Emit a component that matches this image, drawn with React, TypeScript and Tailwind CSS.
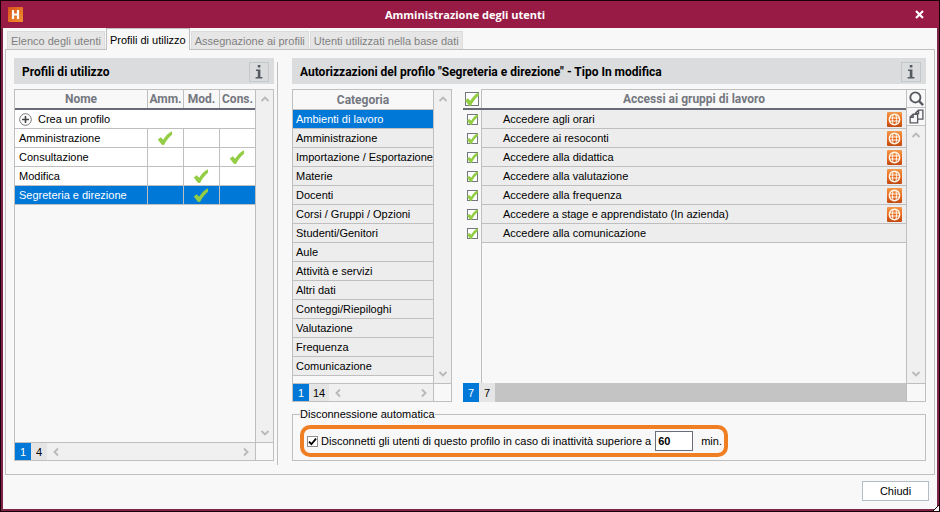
import { useState } from 'react';
import clsx from 'clsx';

const tabs = ['Elenco degli utenti', 'Profili di utilizzo', 'Assegnazione ai profili', 'Utenti utilizzati nella base dati'];

const profiles = [
  { name: 'Amministrazione', level: 'Amm.' },
  { name: 'Consultazione', level: 'Cons.' },
  { name: 'Modifica', level: 'Mod.' },
  { name: 'Segreteria e direzione', level: 'Mod.' },
];

const levels = ['Amm.', 'Mod.', 'Cons.'];

const categories = [
  'Ambienti di lavoro',
  'Amministrazione',
  'Importazione / Esportazione',
  'Materie',
  'Docenti',
  'Corsi / Gruppi / Opzioni',
  'Studenti/Genitori',
  'Aule',
  'Attività e servizi',
  'Altri dati',
  'Conteggi/Riepiloghi',
  'Valutazione',
  'Frequenza',
  'Comunicazione',
];

const accesses = [
  { name: 'Accedere agli orari', web: true },
  { name: 'Accedere ai resoconti', web: true },
  { name: 'Accedere alla didattica', web: true },
  { name: 'Accedere alla valutazione', web: true },
  { name: 'Accedere alla frequenza', web: true },
  { name: 'Accedere a stage e apprendistato (In azienda)', web: true },
  { name: 'Accedere alla comunicazione', web: false },
];

function GreenCheck({ className }: { className?: string }) {
  return (
    <svg viewBox="0 0 16 16" className={className} aria-hidden="true">
      <path d="M.8 9.4 3.8 7.2 6.2 9.8C8 6.6 11 3 14.8 1.2L15.2 4.4C12 7 9 10.8 7 15L4.8 14.8Z" fill="#92cd44" />
    </svg>
  );
}

function Globe() {
  return (
    <svg viewBox="0 0 15 15" className="h-[15px] w-[15px]" aria-hidden="true">
      <defs>
        <linearGradient id="globe" x1="0" y1="0" x2="0" y2="1">
          <stop offset="0" stopColor="#f39a4e" />
          <stop offset="0.5" stopColor="#ea6a1c" />
          <stop offset="1" stopColor="#c04a12" />
        </linearGradient>
      </defs>
      <rect width="15" height="15" rx="1" fill="url(#globe)" />
      <g fill="none" stroke="#fff6ea">
        <circle cx="7.5" cy="7.5" r="5.2" strokeWidth="1.4" />
        <path d="M6 2.6Q4.8 7.5 6 12.4M9 2.6Q10.2 7.5 9 12.4M2.5 6h10M2.5 9h10" strokeWidth="1" />
      </g>
    </svg>
  );
}

function Chevron({ dir }: { dir: 'up' | 'down' | 'left' | 'right' }) {
  const d = {
    up: 'M1.5 7 5 3.5 8.5 7',
    down: 'M1.5 3 5 6.5 8.5 3',
    left: 'M7 1.5 3.5 5 7 8.5',
    right: 'M3 1.5 6.5 5 3 8.5',
  }[dir];
  return (
    <svg viewBox="0 0 10 10" className="h-[10px] w-[10px]" aria-hidden="true">
      <path d={d} fill="none" stroke="#b9b9b9" strokeWidth="1.9" />
    </svg>
  );
}

function VerticalBar() {
  return (
    <div className="flex flex-1 flex-col items-center justify-between bg-[#f0f0f0] py-1">
      <Chevron dir="up" />
      <Chevron dir="down" />
    </div>
  );
}

function Counter({ current, total }: { current: number; total: number }) {
  return (
    <>
      <span className="flex w-4 items-center justify-center bg-[#0078d7] text-white">{current}</span>
      <span className="flex min-w-4 items-center justify-center bg-[#e5e5e5] px-1">{total}</span>
    </>
  );
}

function PanelHeader({ title }: { title: string }) {
  return (
    <div className="flex h-[26px] items-center justify-between bg-[#dadcde] pt-px pr-[5px] pl-2">
      <h2 className="font-['Roboto',Arial,sans-serif] text-[12px] font-bold">{title}</h2>
      <button aria-label="Informazioni" className="flex h-5 w-5 items-center justify-center border border-[#c3c9cb] text-[#565b62]">
        <svg viewBox="0 0 8 14" className="h-[14px] w-2" aria-hidden="true">
          <path d="M2.8 0h2.6v2.4H2.8ZM1 4.6h4.4v7.4H7.4V13.4H.6V12h2.2V6H1Z" fill="currentColor" />
        </svg>
      </button>
    </div>
  );
}

function CheckField({ label, checked, big, onChange }: { label: string; checked: boolean; big?: boolean; onChange: () => void }) {
  return (
    <label className={clsx('relative block', big ? 'h-[14px] w-[14px]' : 'h-[11px] w-[11px]')}>
      <input
        type="checkbox"
        aria-label={label}
        checked={checked}
        onChange={onChange}
        className="block h-full w-full appearance-none border border-[#737780] bg-white"
      />
      {checked && <GreenCheck className="pointer-events-none absolute inset-0 h-full w-full scale-110" />}
    </label>
  );
}

const headFont = "p-0 font-['Roboto',Arial,sans-serif] text-[12px] font-bold text-[#74777f]";
const headCell = 'h-5 border-b-2 border-[#686b75]';

function ProfilesPanel() {
  const [selected, setSelected] = useState('Segreteria e direzione');

  return (
    <section className="flex w-[260px] shrink-0 flex-col gap-[5px]">
      <PanelHeader title="Profili di utilizzo" />
      <div className="flex flex-1 flex-col border border-[#bfbfbf]">
        <div className="flex flex-1">
          <div className="flex-1 border-r border-[#bfbfbf]">
            <table className="w-full table-fixed border-separate border-spacing-0">
              <thead>
                <tr>
                  <th className={clsx(headFont, headCell)}>Nome</th>
                  {levels.map((level) => (
                    <th key={level} className={clsx(headFont, headCell, 'w-9')}>
                      <span className="flex h-[18px] items-center justify-center border-l border-[#bfbfbf]">{level}</span>
                    </th>
                  ))}
                </tr>
              </thead>
              <tbody>
                <tr className="bg-white">
                  <td colSpan={4} className="h-[19px] border-b border-[#bfbfbf] p-0 pl-1">
                    <button className="flex items-center gap-1.5">
                      <svg viewBox="0 0 13 13" className="h-[13px] w-[13px]" aria-hidden="true">
                        <circle cx="6.5" cy="6.5" r="5.8" fill="none" stroke="#777" />
                        <path d="M6.5 3v7M3 6.5h7" stroke="#444" strokeWidth="1.6" />
                      </svg>
                      Crea un profilo
                    </button>
                  </td>
                </tr>
                {profiles.map((p) => (
                  <tr
                    key={p.name}
                    onClick={() => setSelected(p.name)}
                    className={p.name === selected ? 'bg-[#0078d7] text-white' : 'bg-white'}
                  >
                    <td className="h-[19px] border-b border-[#bfbfbf] p-0 pl-1">{p.name}</td>
                    {levels.map((level) => (
                      <td key={level} className="h-[19px] border-b border-l border-[#bfbfbf] p-0 pr-0.5">
                        {p.level === level && <GreenCheck className="mx-auto h-4 w-4" />}
                      </td>
                    ))}
                  </tr>
                ))}
              </tbody>
            </table>
          </div>
          <div className="flex w-[17px] flex-col">
            <VerticalBar />
          </div>
        </div>
        <div className="flex h-[18px] border-t border-[#bfbfbf]">
          <Counter current={1} total={4} />
          <div className="flex flex-1 items-center justify-between border-r border-[#bfbfbf] bg-[#f0f0f0] px-1">
            <Chevron dir="left" />
            <Chevron dir="right" />
          </div>
          <div className="w-[17px]" />
        </div>
      </div>
    </section>
  );
}

function CategoryList() {
  const [selected, setSelected] = useState(categories[0]);

  return (
    <div className="flex w-[160px] shrink-0 flex-col border border-[#bfbfbf]">
      <div className="flex flex-1">
        <div className="flex-1 border-r border-[#bfbfbf]">
          <table className="w-full table-fixed border-separate border-spacing-0">
            <thead>
              <tr>
                <th className={clsx(headFont, 'h-5 border-b border-[#bfbfbf]')}>Categoria</th>
              </tr>
            </thead>
            <tbody>
              {categories.map((c) => (
                <tr key={c} onClick={() => setSelected(c)} className={c === selected ? 'bg-[#0078d7] text-white' : 'bg-[#ededed]'}>
                  <td className="h-[19px] border-b border-[#bfbfbf] p-0 pl-[3px] whitespace-nowrap">{c}</td>
                </tr>
              ))}
            </tbody>
          </table>
        </div>
        <div className="flex w-[17px] flex-col">
          <VerticalBar />
        </div>
      </div>
      <div className="flex h-[18px] border-t border-[#bfbfbf]">
        <Counter current={1} total={14} />
        <div className="flex flex-1 items-center justify-between border-r border-[#bfbfbf] bg-[#f0f0f0] px-1">
          <Chevron dir="left" />
          <Chevron dir="right" />
        </div>
        <div className="w-[17px]" />
      </div>
    </div>
  );
}

function AccessList() {
  const [granted, setGranted] = useState(accesses.map(() => true));
  const all = granted.every(Boolean);

  return (
    <div className="flex flex-1 flex-col">
      <div className="flex flex-1">
        <div className="flex flex-1 flex-col">
          <table className="w-full border-separate border-spacing-0">
            <thead>
              <tr>
                <th className={clsx(headFont, headCell, 'w-[18px] pl-0.5')}>
                  <CheckField big label="Tutti gli accessi" checked={all} onChange={() => setGranted(granted.map(() => !all))} />
                </th>
                <th className={clsx(headFont, headCell)}>
                  <span className="flex h-[19px] items-center justify-center border-t border-l border-[#bfbfbf]">
                    Accessi ai gruppi di lavoro
                  </span>
                </th>
              </tr>
            </thead>
            <tbody>
              {accesses.map((a, i) => (
                <tr key={a.name}>
                  <td className="h-[19px] p-0 pl-1">
                    <CheckField
                      label={a.name}
                      checked={granted[i]}
                      onChange={() => setGranted(granted.map((g, j) => (j === i ? !g : g)))}
                    />
                  </td>
                  <td className="h-[19px] border-b border-l border-[#bfbfbf] bg-[#ededed] p-0 pr-1 pl-[21px]">
                    <span className="flex items-center justify-between">
                      {a.name}
                      {a.web && <Globe />}
                    </span>
                  </td>
                </tr>
              ))}
            </tbody>
          </table>
          <div className="ml-[18px] flex-1 border-l border-[#bfbfbf]" />
        </div>
        <div className="flex w-5 flex-col border border-b-0 border-[#bfbfbf]">
          <button aria-label="Cerca" className="flex h-[18px] items-center justify-center border-b border-[#bfbfbf]">
            <svg viewBox="0 0 16 16" className="h-[15px] w-[15px]" fill="none" stroke="#565960" aria-hidden="true">
              <circle cx="6.8" cy="6.8" r="5.4" strokeWidth="2" />
              <path d="m10.4 10.4 4.6 4.6" strokeWidth="2.6" />
            </svg>
          </button>
          <button aria-label="Copia" className="flex h-[18px] items-center justify-center border-b border-[#bfbfbf]">
            <svg viewBox="0 0 16 16" className="h-[15px] w-[15px]" fill="none" stroke="#565960" strokeWidth="1.4" aria-hidden="true">
              <path d="M7 5.5V4.2L10 1.2h4.8v9.6H9.2M10.2 1.4v3.4H7" />
              <path d="M4.4 5.6h4.8v9.2H1.2V8.6ZM4.5 5.8v3H1.4" />
            </svg>
          </button>
          <VerticalBar />
        </div>
      </div>
      <div className="flex h-[19px]">
        <Counter current={7} total={7} />
        <div className="flex-1 bg-[#c4c4c4]" />
        <div className="w-5 border border-[#bfbfbf]" />
      </div>
    </div>
  );
}

function AutoDisconnect() {
  const [enabled, setEnabled] = useState(true);
  const [minutes, setMinutes] = useState('60');

  return (
    <fieldset className="border border-[#bfbfbf] pr-2 pb-[3px] pl-[7px]">
      <legend className="mb-1 h-[14px] leading-[14px]">Disconnessione automatica</legend>
      <div className="flex h-8 w-fit items-center rounded-[10px] border-4 border-[#ef7f22] pr-0.5 pl-[3px]">
        <input
          id="auto-disconnect"
          type="checkbox"
          checked={enabled}
          onChange={(e) => setEnabled(e.target.checked)}
          className="peer h-[11px] w-[11px] appearance-none border border-[#8e8f8f] bg-white"
        />
        <svg viewBox="0 0 11 11" className="pointer-events-none invisible -ml-[11px] h-[11px] w-[11px] peer-checked:visible" aria-hidden="true">
          <path d="M2 5.6 4.4 8.2 9 2.6" fill="none" stroke="#000" strokeWidth="1.8" />
        </svg>
        <label htmlFor="auto-disconnect" className="pl-[3px]">
          Disconnetti gli utenti di questo profilo in caso di inattività superiore a
        </label>
        <input
          aria-label="Minuti di inattività"
          value={minutes}
          onChange={(e) => setMinutes(e.target.value)}
          className="mr-2 ml-1 h-5 w-[38px] border border-[#6b6e78] bg-white px-0.5 font-bold"
        />
        min.
      </div>
    </fieldset>
  );
}

export default function App() {
  const [tab, setTab] = useState(1);

  return (
    <div className="flex min-h-screen border border-[#1a0008] bg-[#7d2447] font-['Liberation_Sans',Arial,sans-serif] text-[11px] leading-[14px] text-black">
      <div className="flex flex-1 flex-col">
        <header className="grid h-[27px] grid-cols-[30px_1fr_40px] items-center bg-[#981b46] text-white">
          <svg viewBox="0 0 15 15" className="ml-[7px] h-[15px] w-[15px]" aria-hidden="true">
            <defs>
              <linearGradient id="logo" x1="0" y1="0" x2="1" y2="1">
                <stop offset="0" stopColor="#d9521a" />
                <stop offset="1" stopColor="#f0922f" />
              </linearGradient>
            </defs>
            <rect width="15" height="15" rx="1" fill="url(#logo)" />
            <path d="M5 3v9M10 3v9M5 7.5h5" stroke="#fff" strokeWidth="2.2" />
          </svg>
          <h1 className="text-center font-['Open_Sans','Noto_Sans',sans-serif] text-[11px] font-bold">Amministrazione degli utenti</h1>
          <button aria-label="Chiudi finestra" className="flex justify-self-end pr-[15px]">
            <svg viewBox="0 0 9 9" className="h-[9px] w-[9px]" aria-hidden="true">
              <path d="m1 1 7 7M8 1 1 8" stroke="#fff" strokeWidth="2.2" />
            </svg>
          </button>
        </header>

        <main className="relative mx-0.5 mb-0.5 flex flex-1 flex-col bg-[#f8f8f8] px-0.5">
          <div role="tablist" className="flex h-[22px] items-end gap-px pl-0.5">
            {tabs.map((t, i) => (
              <button
                key={t}
                role="tab"
                aria-selected={tab === i}
                onClick={() => setTab(i)}
                className={clsx(
                  'border-x border-t px-[3px] whitespace-nowrap',
                  tab === i ? 'relative z-10 h-[22px] border-[#bfbfbf] bg-[#f8f8f8]' : 'h-[19px] border-[#dcdcdc] bg-[#e6e6e6] text-[#808080]'
                )}
              >
                {t}
              </button>
            ))}
          </div>

          <div className="-mt-px flex flex-1 gap-[3px] border border-[#bfbfbf] px-2 pt-2 pb-[13px]">
            <ProfilesPanel />
            <div className="mt-1 -mb-1 w-px bg-[#bfbfbf]" />
            <section className="ml-[11px] flex flex-1 flex-col gap-[5px]">
              <PanelHeader title={'Autorizzazioni del profilo "Segreteria e direzione" - Tipo In modifica'} />
              <div className="flex flex-1 gap-[11px]">
                <CategoryList />
                <AccessList />
              </div>
              <AutoDisconnect />
            </section>
          </div>

          <footer className="flex h-[34px] items-center justify-end pr-1.5 pb-[3px]">
            <button className="h-5 w-[67px] border border-[#b4bcc6] bg-white">Chiudi</button>
          </footer>

          {/* resize grip */}
          <svg viewBox="0 0 6 6" className="absolute -right-0.5 -bottom-0.5 h-1.5 w-1.5" aria-hidden="true">
            <path d="M0 6 6 0v6Z" fill="#f8f8f8" />
            <path d="M0 6 6 0" stroke="#1a0008" />
          </svg>
        </main>
      </div>
    </div>
  );
}
